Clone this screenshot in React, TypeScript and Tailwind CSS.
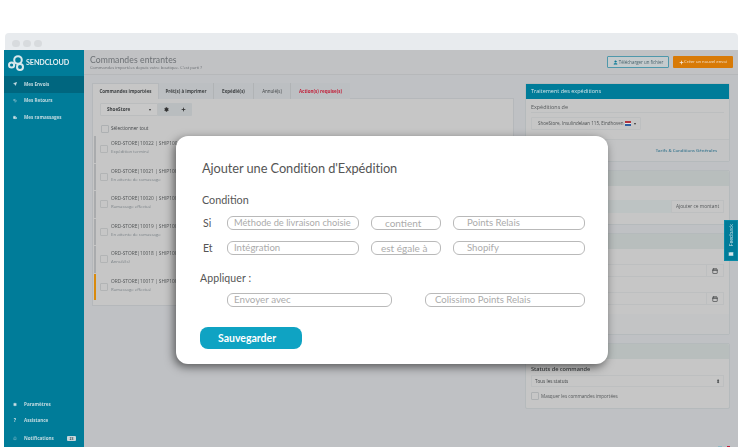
import React from "react";
import { Send, Undo2, Truck, Settings, Bell, Calendar, Plus, User, Mail } from "lucide-react";

const rows = [
  ["ORD-STORE|10022 | SHIP100", "Expédition terminé", "bg-[#a9abad]"],
  ["ORD-STORE|10021 | SHIP100", "En attente de ramassage", "bg-[#a9abad]"],
  ["ORD-STORE|10020 | SHIP100", "Ramassage effectué", "bg-[#a9abad]"],
  ["ORD-STORE|10019 | SHIP100", "En attente de ramassage", "bg-[#a9abad]"],
  ["ORD-STORE|10018 | SHIP100", "Annulé(s)", "bg-[#a9abad]"],
  ["ORD-STORE|10017 | SHIP100", "Ramassage effectué", "bg-[#d98a0c]"],
];

function Pill({ w, size = "text-[10px]", children }: { w: string; size?: string; children: string }) {
  return (
    <div className={`${w} ${size} h-[14px] flex items-center rounded-[6px] border border-[#b9b9b9] pl-[6px] text-[#ababab] leading-none whitespace-nowrap`}>
      {children}
    </div>
  );
}

function Nav({ icon, label, active }: { icon: React.ReactNode; label: string; active?: boolean }) {
  return (
    <div className={`h-[16.6px] flex items-center pl-[9px] gap-[7px] text-[4.6px] font-bold text-[#c3dbe1] ${active ? "bg-[#00667f]" : ""}`}>
      <span className="w-[4px] flex justify-center">{icon}</span>
      {label}
    </div>
  );
}

function PanelHead() {
  return <div className="h-[15px] bg-[#b8bebd] rounded-t-[2px]" />;
}

export default function App() {
  return (
    <div className="relative w-[749px] h-[447px] overflow-hidden bg-white font-['Open_Sans',sans-serif]">
      <div className="pt-[33px] pl-[4px] pr-[11px] h-full flex flex-col blur-[0.35px]">
        <div className="h-[17px] ml-[1px] bg-[#e8ebee] rounded-t-[4px] flex items-center gap-[3.5px] pl-[7px] pt-[4px] shrink-0">
          <span className="w-[7.5px] h-[7.5px] rounded-full bg-[#d8dbde]" />
          <span className="w-[7.5px] h-[7.5px] rounded-full bg-[#d8dbde]" />
          <span className="w-[7.5px] h-[7.5px] rounded-full bg-[#d8dbde]" />
        </div>
        <div className="flex flex-1 min-h-0">
          {/* Sidebar */}
          <aside className="w-[80px] bg-[#007c99] flex flex-col shrink-0">
            <div className="h-[26px] flex items-center pl-[4px] gap-[1px]">
              <svg width="17" height="16" viewBox="0 0 17 16" fill="none" stroke="#d8e8ec" strokeWidth="2">
                <circle cx="3.6" cy="10" r="2.6" />
                <circle cx="10" cy="5" r="3.8" />
                <circle cx="12" cy="12" r="3" />
              </svg>
              <span className="text-[7.2px] font-bold text-[#e3eef1] tracking-[-0.1px] font-['Lato',sans-serif]">SENDCLOUD</span>
            </div>
            <Nav active icon={<Send size={4} fill="#cfe3e8" strokeWidth={2} />} label="Mes Envois" />
            <Nav icon={<Undo2 size={5} strokeWidth={3} />} label="Mes Retours" />
            <Nav icon={<Truck size={5} fill="#cfe3e8" />} label="Mes ramassages" />
            <div className="flex-1" />
            <Nav icon={<Settings size={5} fill="#cfe3e8" />} label="Paramètres" />
            <Nav icon={<span className="text-[5px]">?</span>} label="Assistance" />
            <div className="h-[18px] flex items-center pl-[9px] gap-[7px] text-[4.6px] font-bold text-[#c3dbe1] pr-[8px]">
              <span className="w-[4px] flex justify-center"><Bell size={5} /></span>
              <span className="flex-1">Notifications</span>
              <span className="w-[9px] h-[5px] bg-[#c7d6da] rounded-[1px] text-[3.5px] leading-[5px] text-center text-[#33505a]">23</span>
            </div>
          </aside>

          {/* Main */}
          <main className="flex-1 min-w-0 bg-[#bfc1c4] flex flex-col">
            <header className="h-[25px] shrink-0 bg-[#c1c2c4] border-b border-[#b6b8ba] flex items-center justify-between pl-[6px] pr-[5px]">
              <div className="flex flex-col">
                <span className="text-[8.6px] leading-[10px] text-[#6c7074] font-['Lato',sans-serif] tracking-[0.1px]">Commandes entrantes</span>
                <span className="text-[4.1px] leading-[5px] text-[#6b6f73]">Commandes importées depuis votre boutique. C'est parti ?</span>
              </div>
              <div className="flex gap-[4px]">
                <div className="w-[62px] h-[12px] border border-[#4f98ab] rounded-[1px] bg-[#c5cbcd] flex items-center justify-center gap-[1px] text-[4.4px] text-[#45606a]">
                  <User size={5} fill="#0d7d99" stroke="#0d7d99" />Télécharger un fichier
                </div>
                <div className="w-[60px] h-[12px] bg-[#d87a06] rounded-[1px] flex items-center justify-center text-[4.2px] text-[#f3e4d2]">
                  <Plus size={5} strokeWidth={4} />Créer un nouvel envoi
                </div>
              </div>
            </header>

            <div className="flex-1 min-h-0 flex pt-[8px] pl-[8px] pr-[8px] gap-[11px]">
              {/* Left */}
              <section className="w-[422px] shrink-0 flex flex-col">
                <div className="h-[16px] flex text-[4.5px] font-bold text-[#3f4244] -mb-px relative">
                  <div className="w-[67px] bg-[#c6c6c6] border border-b-0 border-[#b5b8bb] rounded-t-[1px] flex items-center justify-center">Commandes importées</div>
                  <div className="w-[55px] bg-[#bcbfc2] border-r border-[#b0b3b5] flex items-center justify-center">Prêt(s) à imprimer</div>
                  <div className="w-[40px] bg-[#bcbfc2] border-r border-[#b0b3b5] flex items-center justify-center">Expédié(s)</div>
                  <div className="w-[37px] bg-[#bcbfc2] border-r border-[#b0b3b5] flex items-center justify-center font-normal">Annulé(s)</div>
                  <div className="w-[59px] bg-[#bcbfc2] flex items-center justify-center text-[#c2213b]">Action(s) requise(s)</div>
                </div>
                <div className="h-[208px] bg-[#c6c6c6] border border-[#b5b8bb] pt-[4px] pl-[1px]">
                  <div className="flex h-[13px] ml-[6px] text-[4.6px] font-bold text-[#3d4042]">
                    <div className="w-[58px] bg-[#c8c8c8] border border-[#bbbdbe] flex items-center justify-between px-[6px] rounded-l-[1px]">
                      ShoeStore
                      <span className="w-0 h-0 border-x-[1.5px] border-x-transparent border-t-[2px] border-t-[#333]" />
                    </div>
                    <div className="w-[17px] bg-[#b9bdbf] flex items-center justify-center"><Settings size={5} fill="#333" stroke="#333" /></div>
                    <div className="w-[17px] bg-[#b9bdbf] flex items-center justify-center rounded-r-[1px]"><Plus size={5} strokeWidth={4} stroke="#333" /></div>
                  </div>
                  <div className="h-[8px] mt-[8.5px] ml-[7px] flex items-center gap-[2px] text-[4.7px] text-[#44474a]">
                    <span className="w-[8px] h-[8px] border border-[#adb0b2] rounded-[1px]" />
                    Sélectionner tout
                  </div>
                  <div className="mt-[3.5px] flex flex-col">
                    {rows.map((r) => (
                      <div key={r[0]} className="h-[27.6px] flex items-start">
                        <span className={`w-[1.5px] h-[26.5px] shrink-0 ${r[2]}`} />
                        <span className="w-[8px] h-[8px] mt-[9px] ml-[4px] border border-[#b2b4b5] rounded-[1px] shrink-0" />
                        <div className="ml-[3.5px] pt-[3px] flex flex-col">
                          <span className="text-[4.8px] leading-[8px] text-[#515456] whitespace-nowrap">{r[0]}</span>
                          <span className="text-[4.3px] leading-[8px] text-[#7d8489] whitespace-nowrap">{r[1]}</span>
                        </div>
                      </div>
                    ))}
                  </div>
                </div>
              </section>

              {/* Right */}
              <section className="w-[205px] shrink-0 flex flex-col gap-[8px]">
                <div className="h-[79px] bg-[#c6c6c6] border border-[#b5babc] rounded-[2px] flex flex-col">
                  <div className="h-[15px] bg-[#007c99] flex items-center pl-[5px] text-[5.5px] text-[#d3e5ea]">Traitement des expéditions</div>
                  <div className="px-[5px] flex-1">
                    <div className="mt-[4px] pb-[1px] text-[5.4px] leading-[8px] text-[#55585a] border-b border-[#bcbebf]">Expéditions de</div>
                    <div className="mt-[4px] w-[110px] h-[13px] border border-[#bdbfc0] rounded-[1px] flex items-center pl-[6px] gap-[1px] text-[4.5px] text-[#4d5052] whitespace-nowrap">
                      ShoeStore, Insulindelaan 115, Eindhoven
                      <span className="w-[6px] h-[5px] flex flex-col ml-[1px]">
                        <span className="h-1/3 bg-[#b2343f]" /><span className="h-1/3 bg-[#e5e5e5]" /><span className="h-1/3 bg-[#2f5fa0]" />
                      </span>
                      <span className="ml-[2px] w-0 h-0 border-x-[1.5px] border-x-transparent border-t-[2px] border-t-[#333]" />
                    </div>
                  </div>
                  <div className="h-[22px] bg-[#c3c4c5] border-t border-[#bcbebf] flex items-center justify-end pr-[12px] text-[4.3px] font-semibold text-[#3b7890]">Tarifs &amp; Conditions Générales</div>
                </div>

                <div className="h-[55px] bg-[#c6c6c6] border border-[#b5babc] rounded-[2px]">
                  <PanelHead />
                  <div className="flex mt-[14px] mx-[5px] h-[13px]">
                    <div className="flex-1 bg-[#bdc3c3]" />
                    <div className="w-[53px] border border-[#bdbfc0] flex items-center justify-center text-[4.8px] text-[#55585a]">Ajouter ce montant</div>
                  </div>
                </div>

                <div className="h-[102px] bg-[#c6c6c6] border border-[#b5babc] rounded-[2px] flex flex-col">
                  <PanelHead />
                  <div className="flex-1 px-[5px] pt-[15px] flex flex-col gap-[15px]">
                    {[0, 1].map((i) => (
                      <div key={i} className="h-[13px] flex border border-[#bdbfc0]">
                        <div className="flex-1" />
                        <div className="w-[17px] border-l border-[#bdbfc0] flex items-center justify-center">
                          <Calendar size={6} stroke="#3a3d3f" strokeWidth={2.5} />
                        </div>
                      </div>
                    ))}
                  </div>
                  <div className="h-[20px] bg-[#c3c4c5]" />
                </div>

                <div className="h-[66px] bg-[#c6c6c6] border border-[#b5babc] rounded-[2px]">
                  <PanelHead />
                  <div className="px-[5px]">
                    <div className="mt-[6px] text-[5.6px] leading-[8px] font-semibold text-[#3f4244]">Statuts de commande</div>
                    <div className="mt-[2px] h-[12px] border border-[#bdbfc0] flex items-center justify-between px-[3px] text-[4.6px] text-[#3f4244]">
                      Tous les statuts
                      <span className="text-[5px] leading-none">⬍</span>
                    </div>
                    <div className="mt-[5px] flex items-center gap-[2px] text-[4.6px] text-[#55585a]">
                      <span className="w-[8px] h-[8px] border border-[#adb0b2] rounded-[1px]" />
                      Masquer les commandes importées
                    </div>
                  </div>
                </div>
              </section>
            </div>
          </main>
        </div>
      </div>

      {/* Feedback tab */}
      <div className="absolute left-[724px] top-[220px] w-[14px] h-[41px] bg-[#007c99] border border-[#0a8aa6] flex flex-col items-center justify-between py-[3px]">
        <span className="text-[5px] leading-none text-[#d3e5ea] [writing-mode:vertical-rl] rotate-180">Feedback</span>
        <Mail size={6} fill="#d3e5ea" stroke="#007c99" />
      </div>

      {/* Tiny widget peeking in at the bottom edge */}
      <div className="absolute left-[718px] bottom-0 flex gap-[5px]">
        <span className="w-[4px] h-[1px] bg-[#8fb9c4]" />
        <span className="w-[3px] h-[1px] bg-[#c2213b]" />
      </div>

      {/* Modal */}
      <div className="absolute left-[176px] top-[136px] w-[432px] h-[228px] bg-white rounded-[12px] shadow-[-2px_3px_10px_rgba(0,0,0,0.55)] pt-[24px] pl-[24px] pr-[23px] font-['Lato',sans-serif]">
        <div className="ml-[2px] text-[12.8px] leading-[16px] text-[#555555] tracking-[-0.07px]">Ajouter une Condition d'Expédition</div>
        <div className="ml-[2px] mt-[16px] text-[10.8px] leading-[16px] text-[#555555]">Condition</div>
        <div className="mt-[8px] grid grid-cols-[12px_132px_70px_132px] gap-x-[12px] gap-y-[11px] items-center ml-[3px]">
          <span className="text-[10.5px] text-[#555555] leading-[14px]">Si</span>
          <Pill w="w-[132px]" size="text-[9.3px]">Méthode de livraison choisie</Pill>
          <Pill w="w-[70px] !pl-[13px]">contient</Pill>
          <Pill w="w-[132px] !pl-[13px]" size="text-[9.6px]">Points Relais</Pill>
          <span className="text-[10.5px] text-[#555555] leading-[14px]">Et</span>
          <Pill w="w-[132px]" size="text-[9.6px]">Intégration</Pill>
          <Pill w="w-[70px] !pl-[9px]">est égale à</Pill>
          <Pill w="w-[132px] !pl-[13px]" size="text-[9.6px]">Shopify</Pill>
        </div>
        <div className="mt-[15px] text-[10.5px] leading-[16px] text-[#555555] tracking-[0.1px]">Appliquer :</div>
        <div className="mt-[7px] ml-[27px] flex gap-[33px]">
          <Pill w="w-[165px]" size="text-[9.8px]">Envoyer avec</Pill>
          <Pill w="w-[160px] !pl-[9px]" size="text-[9.6px]">Colissimo Points Relais</Pill>
        </div>
        <div className="mt-[20px] w-[102px] h-[22px] rounded-[8px] bg-[#0fa3c3] text-white text-[10.5px] font-bold leading-[23px] pl-[18px]">Sauvegarder</div>
      </div>
    </div>
  );
}
